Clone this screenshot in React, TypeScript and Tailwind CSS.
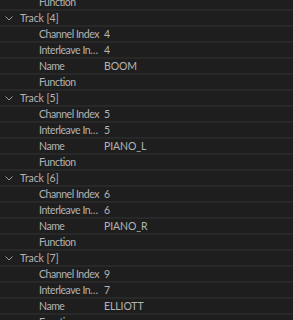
import React from "react";

type Row = { kind: "track"; label: string } | { kind: "prop"; label: string; value?: string };

const rows: Row[] = [
  { kind: "prop", label: "Function" },
  { kind: "track", label: "Track [4]" },
  { kind: "prop", label: "Channel Index", value: "4" },
  { kind: "prop", label: "Interleave Index", value: "4" },
  { kind: "prop", label: "Name", value: "BOOM" },
  { kind: "prop", label: "Function" },
  { kind: "track", label: "Track [5]" },
  { kind: "prop", label: "Channel Index", value: "5" },
  { kind: "prop", label: "Interleave Index", value: "5" },
  { kind: "prop", label: "Name", value: "PIANO_L" },
  { kind: "prop", label: "Function" },
  { kind: "track", label: "Track [6]" },
  { kind: "prop", label: "Channel Index", value: "6" },
  { kind: "prop", label: "Interleave Index", value: "6" },
  { kind: "prop", label: "Name", value: "PIANO_R" },
  { kind: "prop", label: "Function" },
  { kind: "track", label: "Track [7]" },
  { kind: "prop", label: "Channel Index", value: "9" },
  { kind: "prop", label: "Interleave Index", value: "7" },
  { kind: "prop", label: "Name", value: "ELLIOTT" },
  { kind: "prop", label: "Function" },
];

function Chevron() {
  return (
    <svg width="8" height="5" viewBox="0 0 8 5" className="shrink-0">
      <path d="M0.5 0.5 L4 4 L7.5 0.5" fill="none" stroke="#9a9a9a" strokeWidth="1" />
    </svg>
  );
}

export default function App() {
  return (
    <div
      className="w-[293px] h-[320px] overflow-hidden bg-[#1e1e1e] text-[#b4b4b4] text-[10.5px] tracking-[-0.1px]"
      style={{ fontFamily: 'Lato, "Noto Sans", sans-serif' }}
    >
      <div className="-mt-[5px]">
        {rows.map((r, i) =>
          r.kind === "track" ? (
            <div key={i} className="h-[16px] flex items-center border-b-2 border-[#282828] pl-[5px] pt-[1px]">
              <Chevron />
              <span className="ml-[7px] leading-none">{r.label}</span>
            </div>
          ) : (
            <div key={i} className="h-[16px] flex items-center border-b-2 border-[#282828] pt-[1px]">
              <span className="ml-[39px] w-[64px] shrink-0 pr-[3px] overflow-hidden whitespace-nowrap text-ellipsis leading-none tracking-[-0.45px]">{r.label}</span>
              <span className="ml-[1px] leading-none">{r.value ?? ""}</span>
            </div>
          )
        )}
      </div>
    </div>
  );
}
